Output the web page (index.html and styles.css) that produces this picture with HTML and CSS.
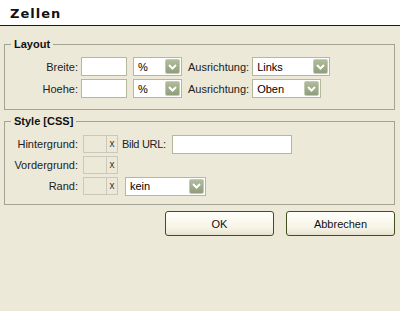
FILE: index.html
```html
<!DOCTYPE html>
<html lang="de">
<head>
  <meta charset="UTF-8" />
  <title>Zellen</title>
  <link rel="stylesheet" href="styles.css">
</head>
<body>

  <div class="dialog-title">Zellen</div>

  <div class="dialog-body">
    <fieldset class="group">
      <legend>Layout</legend>
      <div class="row">
        <label class="lbl">Breite:</label>
        <input class="txt size" type="text">
        <div class="combo unit"><span>%</span><i class="arrow"><svg viewBox="0 0 9 6" width="9" height="6"><path d="M1 1 L4.5 4.5 L8 1" /></svg></i></div>
        <label class="lbl-inline">Ausrichtung:</label>
        <div class="combo align-h"><span>Links</span><i class="arrow"><svg viewBox="0 0 9 6" width="9" height="6"><path d="M1 1 L4.5 4.5 L8 1" /></svg></i></div>
      </div>
      <div class="row">
        <label class="lbl">Hoehe:</label>
        <input class="txt size" type="text">
        <div class="combo unit"><span>%</span><i class="arrow"><svg viewBox="0 0 9 6" width="9" height="6"><path d="M1 1 L4.5 4.5 L8 1" /></svg></i></div>
        <label class="lbl-inline">Ausrichtung:</label>
        <div class="combo align-v"><span>Oben</span><i class="arrow"><svg viewBox="0 0 9 6" width="9" height="6"><path d="M1 1 L4.5 4.5 L8 1" /></svg></i></div>
      </div>
    </fieldset>

    <fieldset class="group style">
      <legend>Style [CSS]</legend>
      <div class="row">
        <label class="lbl">Hintergrund:</label>
        <div class="color"><span class="swatch"></span><span class="clear">x</span></div>
        <label class="lbl-url">Bild URL:</label>
        <input class="txt url" type="text">
      </div>
      <div class="row">
        <label class="lbl">Vordergrund:</label>
        <div class="color"><span class="swatch"></span><span class="clear">x</span></div>
      </div>
      <div class="row">
        <label class="lbl">Rand:</label>
        <div class="color"><span class="swatch"></span><span class="clear">x</span></div>
        <div class="combo border"><span>kein</span><i class="arrow"><svg viewBox="0 0 9 6" width="9" height="6"><path d="M1 1 L4.5 4.5 L8 1" /></svg></i></div>
      </div>
    </fieldset>

    <div class="actions">
      <button class="btn">OK</button>
      <button class="btn">Abbrechen</button>
    </div>
  </div>

</body>
</html>
```

FILE: styles.css
```css
/* Base */
* {
  box-sizing: border-box;
}
body {
  margin: 0;
  background: #ece9d8;
  font-family: 'Liberation Sans', Arial, sans-serif;
  font-size: 11px;
  color: #000;
}

.dialog-title {
  height: 26px;
  background: #fff;
  border-bottom: 1px solid #1a1a1a;
  padding-left: 10px;
  font-family: 'DejaVu Sans', Verdana, sans-serif;
  font-weight: bold;
  font-size: 13px;
  letter-spacing: 1px;
  line-height: 27px;
  color: #111;
}

.dialog-body {
  padding: 12px 5px 0 4px;
}

/* Group boxes */
.group {
  margin: 0;
  padding: 6px 0 11px 0;
  border: 1px solid #a3a395;
  min-width: 0;
}
.group legend {
  margin-left: 6px;
  padding: 0 3px;
  font-weight: bold;
  font-size: 11px;
  line-height: 13px;
  color: #111;
}
.group.style {
  margin-top: 5px;
  padding-top: 7px;
  padding-bottom: 9px;
}

.row {
  display: flex;
  align-items: center;
  height: 19px;
  margin-bottom: 3px;
}
.style .row {
  height: 18px;
  margin-bottom: 3px;
}
.row:last-child {
  margin-bottom: 0;
}

.lbl {
  width: 73px;
  text-align: right;
  color: #222;
}
.lbl-inline {
  margin: 0 3px 0 6px;
  color: #222;
}
.lbl-url {
  margin: 0 3px 0 4px;
  letter-spacing: -0.3px;
  color: #222;
}

/* Inputs */
.txt {
  height: 19px;
  margin: 0 0 0 3px;
  border: 1px solid #b4b99e;
  background: #fff;
  padding: 0 2px;
  font: inherit;
}
.txt.size {
  width: 46px;
}
.txt.url {
  width: 120px;
}

.combo {
  display: flex;
  align-items: center;
  justify-content: space-between;
  height: 19px;
  border: 1px solid #b4b99e;
  background: #fff;
  padding: 0 1px 0 4px;
}
.combo span {
  color: #000;
}
.combo.unit {
  width: 49px;
  margin-left: 6px;
}
.combo.align-h {
  width: 78px;
}
.combo.align-v {
  width: 69px;
}
.combo.border {
  width: 81px;
  margin-left: 7px;
}

.arrow {
  display: flex;
  align-items: center;
  justify-content: center;
  width: 15px;
  height: 15px;
  border-radius: 2px;
  background: linear-gradient(#b0bc9a, #8f9e7a);
  border: 1px solid #c4cab3;
}
.arrow svg path {
  fill: none;
  stroke: #fff;
  stroke-width: 2;
}

/* Colour picker boxes */
.color {
  display: flex;
  height: 18px;
  margin-left: 5px;
}
.swatch {
  width: 24px;
  border: 1px solid #c9c8ba;
  background: #ece9d8;
}
.clear {
  width: 11px;
  border: 1px solid #c9c8ba;
  border-left: none;
  text-align: center;
  line-height: 15px;
  font-size: 10px;
  color: #333;
}

/* Buttons */
.actions {
  display: flex;
  justify-content: flex-end;
  gap: 12px;
  margin-top: 6px;
}
.btn {
  width: 109px;
  height: 25px;
  border: 1px solid #3f4f1c;
  border-radius: 3px;
  background: linear-gradient(#fffffb, #f6f3e6 70%, #e7e3cf);
  font: inherit;
  color: #111;
  padding: 0;
}
```
